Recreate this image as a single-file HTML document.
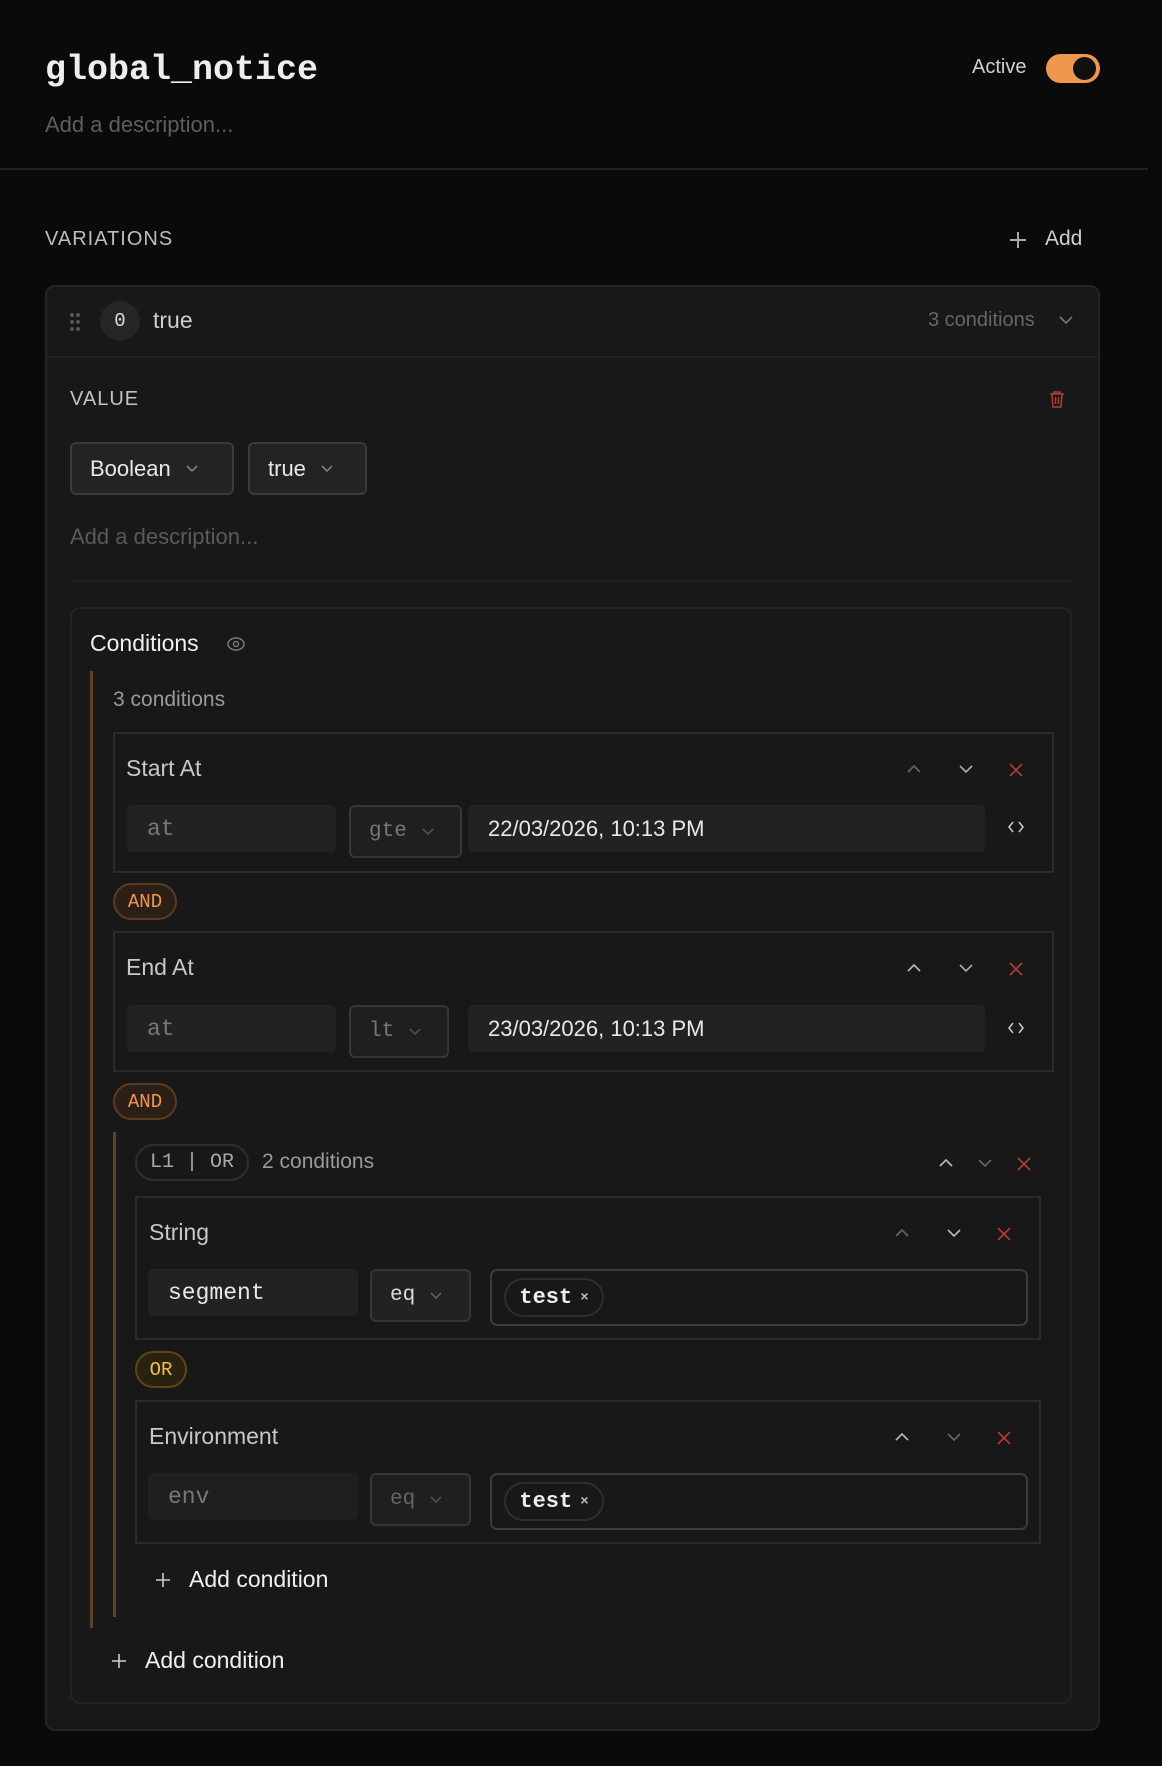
<!DOCTYPE html>
<html><head><meta charset="utf-8"><style>
*{box-sizing:border-box;margin:0;padding:0}
body{width:1162px;height:1766px;background:#0a0a0a;font-family:"Liberation Sans",sans-serif;color:#e8e8e8;position:relative;overflow:hidden}
.a{position:absolute}
.mono{font-family:"Liberation Mono",monospace}
.muted{color:#6f6f6f}
.box{position:absolute;border:2px solid #2a2a2a;background:#181818}
.inp{position:absolute;background:#222;border-radius:5px;font-family:"Liberation Mono",monospace;font-size:23px;display:flex;align-items:center;padding-left:20px}
.sel{position:absolute;background:#1f1f1f;border:2px solid #363636;border-radius:6px;font-family:"Liberation Mono",monospace;font-size:21px;display:flex;align-items:center;padding-left:18px;gap:14px}
.pill{position:absolute;border-radius:20px;font-family:"Liberation Mono",monospace;font-size:19px;display:flex;align-items:center;justify-content:center}
.and{background:#2b1f16;border:2px solid #5a3a22;color:#f0964a}
.ic{position:absolute}
</style></head><body>
<div class="a mono" style="left:45px;top:50px;font-size:35px;font-weight:600;color:#eee">global_notice</div>
<div class="a" style="left:972px;top:56px;font-size:20px;color:#cfcfcf">Active</div>
<div class="a" style="left:1046px;top:54px;width:54px;height:29px;border-radius:15px;background:#ef974c"></div>
<div class="a" style="left:1073px;top:57px;width:23px;height:23px;border-radius:50%;background:#111"></div>
<div class="a muted" style="left:45px;top:112px;font-size:22px;color:#5e5e5e">Add a description...</div>
<div class="a" style="left:0;top:168px;width:1148px;height:2px;background:#222"></div>

<div class="a" style="left:45px;top:228px;font-size:20px;color:#bdbdbd;letter-spacing:1px">VARIATIONS</div>
<svg class="ic" style="left:1007px;top:229px" width="22" height="22" viewBox="0 0 22 22"><path d="M11 3v16M3 11h16" stroke="#aaa" stroke-width="2"/></svg>
<div class="a" style="left:1045px;top:227px;font-size:21px;color:#d0d0d0">Add</div>

<div class="a" style="left:45px;top:285px;width:1055px;height:1446px;border:2px solid #242424;border-radius:10px;background:#181818"></div>
<div class="a" style="left:47px;top:356px;width:1051px;height:2px;background:#222"></div>
<svg class="ic" style="left:70px;top:312px" width="10" height="20"><g fill="#555"><circle cx="2" cy="3" r="2"/><circle cx="8" cy="3" r="2"/><circle cx="2" cy="10" r="2"/><circle cx="8" cy="10" r="2"/><circle cx="2" cy="17" r="2"/><circle cx="8" cy="17" r="2"/></g></svg>
<div class="a mono" style="left:100px;top:301px;width:40px;height:40px;border-radius:50%;background:#262626;display:flex;align-items:center;justify-content:center;font-size:19px;color:#ddd">0</div>
<div class="a" style="left:153px;top:307px;font-size:23px;color:#cfcfcf">true</div>
<div class="a" style="left:928px;top:309px;font-size:20px;color:#666">3 conditions</div>
<svg class="ic" style="left:1058px;top:313px" width="16" height="14" viewBox="0 0 16 14"><path d="M2 4l6 6 6-6" stroke="#777" stroke-width="1.6" fill="none"/></svg>

<div class="a" style="left:70px;top:388px;font-size:20px;color:#c4c4c4;letter-spacing:1px">VALUE</div>
<svg class="ic" style="left:1049px;top:390px" width="16" height="18" viewBox="0 0 16 18"><path d="M1 4h14M5 4V2h6v2M3 4l1 13h8l1-13M6.5 7v7M9.5 7v7" stroke="#b33a3a" stroke-width="1.5" fill="none"/></svg>
<div class="sel" style="left:70px;top:442px;width:164px;height:53px;font-family:'Liberation Sans',sans-serif;font-size:22px;color:#e8e8e8;background:#232323;border-color:#3a3a3a">Boolean <svg width="14" height="10" viewBox="0 0 14 10"><path d="M2 2l5 5 5-5" stroke="#888" stroke-width="1.5" fill="none"/></svg></div>
<div class="sel" style="left:248px;top:442px;width:119px;height:53px;font-family:'Liberation Sans',sans-serif;font-size:22px;color:#e8e8e8;background:#232323;border-color:#3a3a3a">true <svg width="14" height="10" viewBox="0 0 14 10"><path d="M2 2l5 5 5-5" stroke="#888" stroke-width="1.5" fill="none"/></svg></div>
<div class="a" style="left:70px;top:524px;font-size:22px;color:#5a5a5a">Add a description...</div>
<div class="a" style="left:70px;top:580px;width:1002px;height:2px;background:#202020"></div>

<div class="a" style="left:70px;top:607px;width:1002px;height:1097px;border:2px solid #232323;border-radius:10px;background:#181818"></div>
<div class="a" style="left:90px;top:630px;font-size:23px;color:#f0f0f0">Conditions</div>
<svg class="ic" style="left:226px;top:635px" width="20" height="18" viewBox="0 0 20 18"><ellipse cx="10" cy="9" rx="8" ry="6" stroke="#777" stroke-width="1.5" fill="none"/><circle cx="10" cy="9" r="2.5" stroke="#777" stroke-width="1.5" fill="none"/></svg>
<div class="a" style="left:90px;top:671px;width:3px;height:957px;background:#5c4326"></div>
<div class="a" style="left:113px;top:688px;font-size:21px;color:#9a9a9a">3 conditions</div>

<!-- Start At -->
<div class="box" style="left:113px;top:732px;width:941px;height:141px"></div>
<div class="a" style="left:126px;top:755px;font-size:23px;color:#c8c8c8">Start At</div>
<svg class="ic" style="left:905px;top:762px" width="18" height="14" viewBox="0 0 18 14"><path d="M3 10l6-6 6 6" stroke="#666" stroke-width="1.6" fill="none"/></svg>
<svg class="ic" style="left:957px;top:762px" width="18" height="14" viewBox="0 0 18 14"><path d="M3 4l6 6 6-6" stroke="#aaa" stroke-width="1.6" fill="none"/></svg>
<svg class="ic" style="left:1007px;top:761px" width="18" height="18" viewBox="0 0 18 18"><path d="M3 3l12 12M15 3L3 15" stroke="#b53a3a" stroke-width="1.6"/></svg>
<div class="inp" style="left:127px;top:805px;width:209px;height:47px;color:#777">at</div>
<div class="sel" style="left:349px;top:805px;width:113px;height:53px;color:#777">gte <svg width="14" height="10" viewBox="0 0 14 10"><path d="M2 2l5 5 5-5" stroke="#555" stroke-width="1.5" fill="none"/></svg></div>
<div class="inp" style="left:468px;top:805px;width:517px;height:47px;font-family:'Liberation Sans',sans-serif;font-size:22px;color:#e8e8e8">22/03/2026, 10:13 PM</div>
<svg class="ic" style="left:1006px;top:819px" width="20" height="16" viewBox="0 0 20 16"><path d="M7 3L3 8l4 5M13 3l4 5-4 5" stroke="#ccc" stroke-width="1.5" fill="none"/></svg>

<div class="pill and" style="left:113px;top:883px;width:64px;height:37px">AND</div>

<!-- End At -->
<div class="box" style="left:113px;top:931px;width:941px;height:141px"></div>
<div class="a" style="left:126px;top:954px;font-size:23px;color:#c8c8c8">End At</div>
<svg class="ic" style="left:905px;top:961px" width="18" height="14" viewBox="0 0 18 14"><path d="M3 10l6-6 6 6" stroke="#bbb" stroke-width="1.6" fill="none"/></svg>
<svg class="ic" style="left:957px;top:961px" width="18" height="14" viewBox="0 0 18 14"><path d="M3 4l6 6 6-6" stroke="#aaa" stroke-width="1.6" fill="none"/></svg>
<svg class="ic" style="left:1007px;top:960px" width="18" height="18" viewBox="0 0 18 18"><path d="M3 3l12 12M15 3L3 15" stroke="#b53a3a" stroke-width="1.6"/></svg>
<div class="inp" style="left:127px;top:1005px;width:209px;height:47px;color:#777">at</div>
<div class="sel" style="left:349px;top:1005px;width:100px;height:53px;color:#777">lt <svg width="14" height="10" viewBox="0 0 14 10"><path d="M2 2l5 5 5-5" stroke="#555" stroke-width="1.5" fill="none"/></svg></div>
<div class="inp" style="left:468px;top:1005px;width:517px;height:47px;font-family:'Liberation Sans',sans-serif;font-size:22px;color:#e8e8e8">23/03/2026, 10:13 PM</div>
<svg class="ic" style="left:1006px;top:1020px" width="20" height="16" viewBox="0 0 20 16"><path d="M7 3L3 8l4 5M13 3l4 5-4 5" stroke="#ccc" stroke-width="1.5" fill="none"/></svg>

<div class="pill and" style="left:113px;top:1083px;width:64px;height:37px">AND</div>

<!-- Group -->
<div class="a" style="left:113px;top:1132px;width:3px;height:485px;background:#5c4516"></div>
<div class="pill" style="left:135px;top:1144px;width:114px;height:37px;border:2px solid #2e2e2e;color:#aaa;font-size:20px">L1 | OR</div>
<div class="a" style="left:262px;top:1150px;font-size:21px;color:#9a9a9a">2 conditions</div>
<svg class="ic" style="left:937px;top:1156px" width="18" height="14" viewBox="0 0 18 14"><path d="M3 10l6-6 6 6" stroke="#bbb" stroke-width="1.6" fill="none"/></svg>
<svg class="ic" style="left:976px;top:1156px" width="18" height="14" viewBox="0 0 18 14"><path d="M3 4l6 6 6-6" stroke="#666" stroke-width="1.6" fill="none"/></svg>
<svg class="ic" style="left:1015px;top:1155px" width="18" height="18" viewBox="0 0 18 18"><path d="M3 3l12 12M15 3L3 15" stroke="#b53a3a" stroke-width="1.6"/></svg>

<div class="box" style="left:135px;top:1196px;width:906px;height:144px"></div>
<div class="a" style="left:149px;top:1219px;font-size:23px;color:#c8c8c8">String</div>
<svg class="ic" style="left:893px;top:1226px" width="18" height="14" viewBox="0 0 18 14"><path d="M3 10l6-6 6 6" stroke="#666" stroke-width="1.6" fill="none"/></svg>
<svg class="ic" style="left:945px;top:1226px" width="18" height="14" viewBox="0 0 18 14"><path d="M3 4l6 6 6-6" stroke="#bbb" stroke-width="1.6" fill="none"/></svg>
<svg class="ic" style="left:995px;top:1225px" width="18" height="18" viewBox="0 0 18 18"><path d="M3 3l12 12M15 3L3 15" stroke="#b53a3a" stroke-width="1.6"/></svg>
<div class="inp" style="left:148px;top:1269px;width:210px;height:47px;color:#e8e8e8">segment</div>
<div class="sel" style="left:370px;top:1269px;width:101px;height:53px;color:#ddd;background:#222">eq <svg width="14" height="10" viewBox="0 0 14 10"><path d="M2 2l5 5 5-5" stroke="#666" stroke-width="1.5" fill="none"/></svg></div>
<div class="a" style="left:490px;top:1269px;width:538px;height:57px;border:2px solid #3c3c3c;border-radius:7px"></div>
<div class="pill" style="left:504px;top:1278px;width:100px;height:39px;border:2px solid #2e2e2e;color:#eee;font-size:22px;font-weight:600">test <span style="font-size:14px;margin-left:8px;color:#bbb">×</span></div>

<div class="pill" style="left:135px;top:1351px;width:52px;height:37px;background:#2a2210;border:2px solid #5a4714;color:#f2c230">OR</div>

<div class="box" style="left:135px;top:1400px;width:906px;height:144px"></div>
<div class="a" style="left:149px;top:1423px;font-size:23px;color:#c8c8c8">Environment</div>
<svg class="ic" style="left:893px;top:1430px" width="18" height="14" viewBox="0 0 18 14"><path d="M3 10l6-6 6 6" stroke="#bbb" stroke-width="1.6" fill="none"/></svg>
<svg class="ic" style="left:945px;top:1430px" width="18" height="14" viewBox="0 0 18 14"><path d="M3 4l6 6 6-6" stroke="#666" stroke-width="1.6" fill="none"/></svg>
<svg class="ic" style="left:995px;top:1429px" width="18" height="18" viewBox="0 0 18 18"><path d="M3 3l12 12M15 3L3 15" stroke="#b53a3a" stroke-width="1.6"/></svg>
<div class="inp" style="left:148px;top:1473px;width:210px;height:47px;color:#777;background:#1f1f1f">env</div>
<div class="sel" style="left:370px;top:1473px;width:101px;height:53px;color:#666">eq <svg width="14" height="10" viewBox="0 0 14 10"><path d="M2 2l5 5 5-5" stroke="#555" stroke-width="1.5" fill="none"/></svg></div>
<div class="a" style="left:490px;top:1473px;width:538px;height:57px;border:2px solid #3c3c3c;border-radius:7px"></div>
<div class="pill" style="left:504px;top:1482px;width:100px;height:39px;border:2px solid #2e2e2e;color:#eee;font-size:22px;font-weight:600">test <span style="font-size:14px;margin-left:8px;color:#bbb">×</span></div>

<svg class="ic" style="left:154px;top:1571px" width="18" height="18" viewBox="0 0 18 18"><path d="M9 2v14M2 9h14" stroke="#ccc" stroke-width="1.6"/></svg>
<div class="a" style="left:189px;top:1566px;font-size:23px;color:#f0f0f0">Add condition</div>

<svg class="ic" style="left:110px;top:1652px" width="18" height="18" viewBox="0 0 18 18"><path d="M9 2v14M2 9h14" stroke="#ccc" stroke-width="1.6"/></svg>
<div class="a" style="left:145px;top:1647px;font-size:23px;color:#f0f0f0">Add condition</div>
</body></html>
